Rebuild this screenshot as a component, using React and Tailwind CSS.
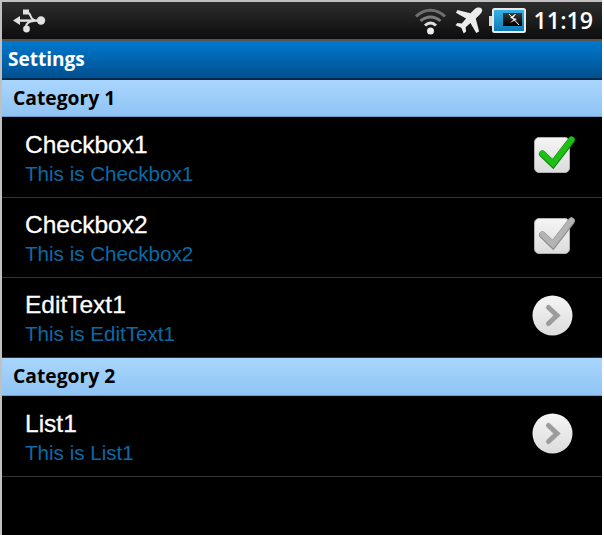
const sans = "font-['Liberation_Sans',Arial,sans-serif]";
const droid = "font-['Open_Sans','Noto_Sans',sans-serif]";

function Usb() {
  return (
    <svg width="34" height="26" viewBox="0 0 34 26" className="block">
      <g fill="#e2e2e2" stroke="none">
        <polygon points="1,12.500 8,8 8,17" />
        <circle cx="29" cy="12.500" r="4.200" />
        <rect x="7" y="11.400" width="20" height="2.400" />
        <rect x="11" y="1.500" width="6" height="5" />
        <circle cx="14.500" cy="21" r="3.400" />
      </g>
      <path d="M15 4.500 C20 4.500 17 11.500 23 12.500 M14.500 20 C13 16 17 13 22 13" fill="none" stroke="#e2e2e2" strokeWidth="2" />
    </svg>
  );
}

function Wifi() {
  return (
    <svg width="33" height="28" viewBox="0 0 32 28" className="block">
      <path d="M1.500 9.500 C10 1 22 1 30.500 9.500" fill="none" stroke="#6f6f6f" strokeWidth="3" />
      <path d="M6 14 C12 8.500 20 8.500 26 14" fill="none" stroke="#7c7c7c" strokeWidth="3" />
      <path d="M10.500 18.500 C14 15 18 15 21.500 18.500" fill="none" stroke="#e0e0e0" strokeWidth="3" />
      <circle cx="16" cy="24" r="3.500" fill="#ececec" />
    </svg>
  );
}

function Plane() {
  return (
    <svg width="30" height="27" viewBox="0 0 30 28" className="block">
      <path
        d="M28 1.500 C29.500 3 28.500 5.500 26.500 7.500 L22 12 L25.500 25.500 L22.500 27 L16.500 16.500 L11.500 21 L12 25.500 L9.500 27.500 L7 21.500 L1 19 L3 16.500 L7.500 17 L12 12 L1.500 6 L3 3 L16.500 6.500 L21 2 C23.500 0 26.500 0 28 1.500 Z"
        fill="#ececec"
      />
    </svg>
  );
}

function Battery() {
  return (
    <svg width="37" height="26" viewBox="0 0 37 26" className="block">
      <defs>
        <linearGradient id="bt" x1="0" y1="0" x2="0" y2="1">
          <stop offset="0" stopColor="#37b6e8" />
          <stop offset="1" stopColor="#0a76b4" />
        </linearGradient>
        <linearGradient id="bk" x1="0" y1="0" x2="0" y2="1">
          <stop offset="0" stopColor="#3a3a3a" />
          <stop offset="1" stopColor="#000" />
        </linearGradient>
      </defs>
      <rect x="0" y="8" width="3" height="10" fill="#d8d8d8" />
      <rect x="4" y="1" width="32" height="23" rx="1.500" fill="url(#bt)" stroke="#e8e8e8" strokeWidth="2" />
      <rect x="14" y="5" width="19" height="13" fill="url(#bk)" />
      <path d="M26 6 L21 10 L25 11 L21 15 L28 11 L24 10 L27 6 Z" fill="#fff" />
      <path d="M20 6 L30 17" stroke="#fff" strokeWidth="1" />
    </svg>
  );
}

function Check({ on }) {
  const id = on ? "bx1" : "bx2";
  return (
    <svg width="44" height="40" viewBox="0 0 44 40" className="block">
      <defs>
        <linearGradient id={id} x1="0" y1="0" x2="0" y2="1">
          <stop offset="0" stopColor="#f5f5f5" />
          <stop offset="1" stopColor="#dcdcdc" />
        </linearGradient>
      </defs>
      <rect x="2.500" y="2.500" width="35" height="35" rx="4.500" fill={`url(#${id})`} stroke="#b0b0b0" strokeWidth="1" />
      <path
        d="M10.500 19 L21 29 L39.500 5"
        fill="none"
        stroke={on ? "#12851a" : "#8a8a8a"}
        strokeWidth="7"
        strokeLinecap="round"
        strokeLinejoin="miter"
      />
      <path
        d="M10.500 18.500 L21 28.500 L39.500 4.500"
        fill="none"
        stroke={on ? "#1fc014" : "#b4b4b4"}
        strokeWidth="5.500"
        strokeLinecap="round"
        strokeLinejoin="miter"
      />
    </svg>
  );
}

function Arrow({ id }) {
  return (
    <svg width="41" height="41" viewBox="0 0 41 41" className="block">
      <defs>
        <linearGradient id={id} x1="0" y1="0" x2="0" y2="1">
          <stop offset="0" stopColor="#f5f5f5" />
          <stop offset="1" stopColor="#dcdcdc" />
        </linearGradient>
      </defs>
      <circle cx="20.500" cy="20.500" r="20" fill={`url(#${id})`} />
      <path d="M16.500 12.500 L25 20.500 L16.500 28.500" fill="none" stroke="#9c9c9c" strokeWidth="5" strokeLinecap="round" />
    </svg>
  );
}

function Category({ children, h }) {
  return (
    <div
      className={`${h} flex items-center pl-[11px] border-b border-[#6f9cc8] bg-gradient-to-b from-[#a9d6fd] to-[#8fc4f5] text-black text-[19.300px] font-bold ${droid}`}
    >
      {children}
    </div>
  );
}

function Row({ title, sub, icon, h }) {
  return (
    <div className={`${h} flex items-center justify-between border-b border-[#333333] pl-[23px] pr-[26px]`}>
      <div className={`flex flex-col pt-[2px] ${sans}`}>
        <div className="text-[24.500px] leading-[30px] text-white [-webkit-text-stroke:0.3px_white]">{title}</div>
        <div className="text-[20.600px] leading-[26px] mt-[1px] text-[#0a6aa8]">{sub}</div>
      </div>
      {icon}
    </div>
  );
}

export default function App() {
  return (
    <div className="w-[604px] h-[535px] bg-white overflow-hidden">
      <div className="mr-[2px] h-[535px] flex flex-col bg-black border-t-2 border-l-2 border-[#c0c0c0]">
        <div className="h-[37px] flex items-center justify-between pl-[10px] pr-[9px] bg-gradient-to-b from-[#2e2e2e] to-[#0d0d0d] border-b-2 border-[#555555] box-content">
          <Usb />
          <div className="flex items-center">
            <Wifi />
            <div className="ml-[7px]"><Plane /></div>
            <div className="ml-[5px]"><Battery /></div>
            <span className={`ml-[8px] text-white text-[23.200px] font-semibold leading-none ${droid}`}>11:19</span>
          </div>
        </div>
        <div className={`h-[39px] flex items-center pl-[6px] bg-gradient-to-b from-[#0079cf] to-[#00508f] border-b-2 border-[#02294a] text-white text-[19px] font-bold ${droid}`}>
          Settings
        </div>
        <Category h="h-[37px]">Category 1</Category>
        <Row title="Checkbox1" sub="This is Checkbox1" icon={<div className="mb-[4px]"><Check on /></div>} h="h-[81px]" />
        <Row title="Checkbox2" sub="This is Checkbox2" icon={<div className="mb-[4px]"><Check /></div>} h="h-[80px]" />
        <Row title="EditText1" sub="This is EditText1" icon={<div className="mb-[5px] mr-[3px]"><Arrow id="ar1" /></div>} h="h-[80px]" />
        <Category h="h-[38px]">Category 2</Category>
        <Row title="List1" sub="This is List1" icon={<div className="mb-[5px] mr-[3px]"><Arrow id="ar2" /></div>} h="h-[81px]" />
      </div>
    </div>
  );
}
